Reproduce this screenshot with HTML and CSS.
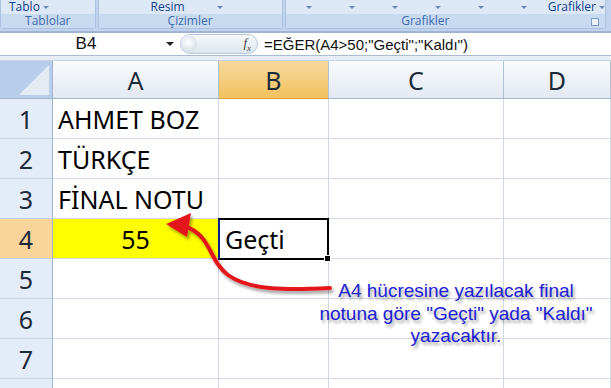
FILE: index.html
```html
<!DOCTYPE html>
<html lang="tr">

<head>
    <meta charset="UTF-8">
    <title>EĞER formülü</title>
    <link rel="stylesheet" href="styles.css">
</head>

<body>
    <div class="sheet">
        <!-- ribbon -->
        <div class="ribbon">
            <div class="group g-tablo">
                <div class="tools"><span class="tool">Tablo <i class="dd"></i></span></div>
                <div class="glabel">Tablolar</div>
            </div>
            <div class="group g-cizim">
                <div class="tools"><span class="tool">Resim</span><i class="dd"></i></div>
                <div class="glabel">Çizimler</div>
            </div>
            <div class="group g-grafik">
                <div class="tools spread">
                    <i class="dd"></i><i class="dd"></i><i class="dd"></i><i class="dd"></i><i class="dd"></i><i class="dd"></i>
                    <span class="tool last">Grafikler <i class="dd"></i></span>
                </div>
                <div class="glabel">Grafikler<span class="launcher"></span></div>
            </div>
        </div>

        <!-- formula bar -->
        <div class="fbar">
            <div class="namebox">B4</div>
            <i class="dd dark"></i>
            <div class="pill">
                <span class="knob"></span>
                <span class="fx">f<sub>x</sub></span>
            </div>
            <div class="formula">=EĞER(A4&gt;50;"Geçti";"Kaldı")</div>
        </div>
        <div class="band"></div>

        <!-- grid -->
        <div class="grid">
            <div class="corner"><span class="tri"></span></div>
            <div class="colh">A</div>
            <div class="colh sel">B</div>
            <div class="colh">C</div>
            <div class="colh">D</div>

            <div class="rowh">1</div><div class="cell">AHMET BOZ</div><div class="cell"></div><div class="cell"></div><div class="cell"></div>
            <div class="rowh">2</div><div class="cell">TÜRKÇE</div><div class="cell"></div><div class="cell"></div><div class="cell"></div>
            <div class="rowh">3</div><div class="cell">FİNAL NOTU</div><div class="cell"></div><div class="cell"></div><div class="cell"></div>
            <div class="rowh sel">4</div><div class="cell yellow">55</div><div class="cell active">Geçti<span class="handle"></span></div><div class="cell"></div><div class="cell"></div>
            <div class="rowh">5</div><div class="cell"></div><div class="cell"></div><div class="cell"></div><div class="cell"></div>
            <div class="rowh">6</div><div class="cell"></div><div class="cell"></div><div class="cell"></div><div class="cell"></div>
            <div class="rowh">7</div><div class="cell"></div><div class="cell"></div><div class="cell"></div><div class="cell"></div>
            <div class="rowh">8</div><div class="cell"></div><div class="cell"></div><div class="cell"></div><div class="cell"></div>

            <!-- annotation -->
            <svg class="arrow" width="611" height="388" viewBox="0 0 611 388">
                <defs>
                    <filter id="sh" x="-10%" y="-10%" width="130%" height="130%">
                        <feDropShadow dx="2" dy="3" stdDeviation="1.5" flood-color="#000" flood-opacity="0.35" />
                    </filter>
                </defs>
                <g filter="url(#sh)">
                    <path d="M330 325 C 290 327, 250 328, 228 312 C 208 297, 212 272, 184 263" fill="none" stroke="#e3141b" stroke-width="4" stroke-linecap="round" />
                    <path d="M166 261 L191 250 L187 274 Z" fill="#e3141b" />
                </g>
            </svg>
            <div class="note">A4 hücresine yazılacak final<br>notuna göre "Geçti" yada "Kaldı"<br>yazacaktır.</div>
        </div>
    </div>
</body>

</html>
```

FILE: styles.css
```css
body {
    margin: 0;
    padding: 0;
    background: #fff;
}

.sheet {
    width: 611px;
    height: 388px;
    overflow: hidden;
    position: relative;
}

/* ribbon */

.ribbon {
    height: 31px;
    display: flex;
    gap: 2px;
    background: #bfd3ec;
    border-bottom: 2px solid #9db4d3;
    font-family: "Open Sans", "Noto Sans", sans-serif;
    font-size: 12px;
    color: #15428b;
}

.group {
    display: flex;
    flex-direction: column;
    background: #dce8f6;
    border: 1px solid #aac2df;
    border-top: none;
    border-radius: 0 0 3px 3px;
    margin-bottom: 2px;
}

.g-tablo {
    width: 94px;
}

.g-cizim {
    width: 184px;
}

.g-grafik {
    flex: 1;
    margin-right: 5px;
}

.tools {
    height: 15px;
    display: flex;
    align-items: center;
    padding-left: 8px;
    line-height: 14px;
}

.g-cizim .tools {
    padding-left: 52px;
    gap: 32px;
}

.tools.spread {
    padding-left: 20px;
    gap: 37px;
}

.tool {
    display: inline-flex;
    align-items: center;
    gap: 3px;
}

.tool.last {
    margin-left: -16px;
}

.glabel {
    flex: 1;
    background: #c8daf0;
    text-align: center;
    line-height: 14px;
    color: #3e6aaa;
    position: relative;
}

.g-grafik .glabel {
    padding-right: 40px;
}

.launcher {
    position: absolute;
    right: 6px;
    top: 4px;
    width: 6px;
    height: 6px;
    border: 1px solid #7f9cc4;
    background: #eef3fa;
}

.dd {
    display: inline-block;
    width: 0;
    height: 0;
    border-left: 3px solid transparent;
    border-right: 3px solid transparent;
    border-top: 3px solid #6b87b5;
}

.dd.dark {
    border-left-width: 4px;
    border-right-width: 4px;
    border-top: 4px solid #222;
}

/* formula bar */

.fbar {
    height: 22px;
    display: flex;
    align-items: center;
    background: #fff;
    border-bottom: 1px solid #a9bcd6;
    font-family: "Liberation Sans", Arial, sans-serif;
}

.namebox {
    width: 160px;
    text-align: center;
    font-size: 17px;
    color: #111;
    padding-left: 6px;
}

.pill {
    width: 78px;
    height: 20px;
    margin-left: 6px;
    border: 1px solid #b7c7dc;
    border-radius: 10px;
    background: linear-gradient(to bottom, #f7f9fc, #dfe6ef);
    display: flex;
    align-items: center;
    justify-content: space-between;
    padding: 0 6px 0 2px;
    box-sizing: border-box;
}

.knob {
    width: 14px;
    height: 16px;
    border-radius: 50%;
    background: radial-gradient(circle at 40% 40%, #fff, #c9d3df);
}

.fx {
    font-family: "Liberation Serif", serif;
    font-style: italic;
    font-size: 13px;
    color: #444;
}

.fx sub {
    font-size: 9px;
}

.formula {
    margin-left: 6px;
    font-size: 15px;
    color: #111;
}

.band {
    height: 4px;
    background: #e9eef6;
    border-bottom: 1px solid #c6d3e4;
}

/* grid */

.grid {
    display: grid;
    grid-template-columns: 53px 166px 110px 175px 107px;
    grid-template-rows: 38px repeat(8, 40px);
    font-family: "Noto Sans", "Open Sans", sans-serif;
    position: relative;
}

.corner {
    background: #b7cde9;
    border-right: 1px solid #9eb6ce;
    border-bottom: 1px solid #9eb6ce;
    position: relative;
    overflow: hidden;
}

.tri {
    position: absolute;
    right: 3px;
    bottom: 3px;
    width: 0;
    height: 0;
    border-left: 30px solid transparent;
    border-bottom: 30px solid #e4ebf4;
}

.colh {
    background: linear-gradient(to bottom, #f9fbfd, #e3e9f2);
    border-right: 1px solid #b0c2d8;
    border-bottom: 1px solid #9eb6ce;
    display: flex;
    align-items: center;
    justify-content: center;
    font-size: 25px;
    color: #1c2a3a;
}

.colh.sel {
    background: linear-gradient(to bottom, #f8d99c, #f1c15f);
    border-bottom-color: #e3a33c;
}

.rowh {
    background: #e4ecf7;
    border-right: 1px solid #9eb6ce;
    border-bottom: 1px solid #c5d1e0;
    display: flex;
    align-items: center;
    justify-content: center;
    font-size: 25px;
    color: #1c2a3a;
}

.rowh.sel {
    background: #f9d59b;
}

.cell {
    border-right: 1px solid #d0d7e5;
    border-bottom: 1px solid #d0d7e5;
    display: flex;
    align-items: center;
    padding-left: 5px;
    font-size: 25px;
    color: #000;
    white-space: nowrap;
}

.cell.yellow {
    background: #ffff00;
    justify-content: center;
    padding-left: 0;
}

.cell.active {
    border: 2px solid #000;
    border-left-color: #0a1d8c;
    margin: -1px 0 -1px -1px;
    position: relative;
}

.handle {
    position: absolute;
    right: -4px;
    bottom: -4px;
    width: 5px;
    height: 5px;
    background: #000;
    border: 1px solid #fff;
}

.arrow {
    position: absolute;
    left: 0;
    top: -98px;
    pointer-events: none;
}

.note {
    position: absolute;
    left: 300px;
    top: 219px;
    width: 312px;
    text-align: center;
    font-family: "Liberation Sans", Arial, sans-serif;
    font-size: 19px;
    line-height: 22.5px;
    color: #2020d4;
    text-shadow: 2px 3px 3px rgba(0, 0, 0, 0.35);
}
```
